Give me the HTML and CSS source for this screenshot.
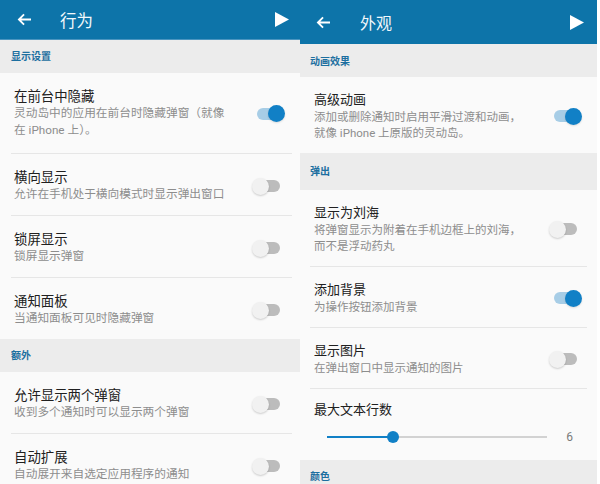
FILE: index.html
```html
<!DOCTYPE html>
<html lang="zh">
<head>
<meta charset="utf-8">
<link rel="stylesheet" href="styles.css">
</head>
<body>
<div class="screen">
  <div class="panel panel-left">
    <div class="appbar">
      <svg class="back" viewBox="0 0 16 14" width="15" height="13"><path d="M15 7H2M7.5 1.5L2 7l5.5 5.5" fill="none" stroke="#fff" stroke-width="2"/></svg>
      <span class="appbar-title">行为</span>
      <svg class="play" viewBox="0 0 14 15" width="14" height="15"><path d="M0 0L14 7.5L0 15Z" fill="#fff"/></svg>
    </div>
    <div class="section">显示设置</div>
    <div class="item">
      <div class="text">
        <div class="title">在前台中隐藏</div>
        <div class="sub">灵动岛中的应用在前台时隐藏弹窗（就像<br>在 iPhone 上）。</div>
      </div>
      <div class="toggle on"><span class="thumb"></span></div>
    </div>
    <div class="item">
      <div class="text">
        <div class="title">横向显示</div>
        <div class="sub">允许在手机处于横向模式时显示弹出窗口</div>
      </div>
      <div class="toggle"><span class="thumb"></span></div>
    </div>
    <div class="item">
      <div class="text">
        <div class="title">锁屏显示</div>
        <div class="sub">锁屏显示弹窗</div>
      </div>
      <div class="toggle"><span class="thumb"></span></div>
    </div>
    <div class="item last">
      <div class="text">
        <div class="title">通知面板</div>
        <div class="sub">当通知面板可见时隐藏弹窗</div>
      </div>
      <div class="toggle"><span class="thumb"></span></div>
    </div>
    <div class="section">额外</div>
    <div class="item">
      <div class="text">
        <div class="title">允许显示两个弹窗</div>
        <div class="sub">收到多个通知时可以显示两个弹窗</div>
      </div>
      <div class="toggle"><span class="thumb"></span></div>
    </div>
    <div class="item last">
      <div class="text">
        <div class="title">自动扩展</div>
        <div class="sub">自动展开来自选定应用程序的通知</div>
      </div>
      <div class="toggle"><span class="thumb"></span></div>
    </div>
  </div>

  <div class="panel panel-right">
    <div class="appbar">
      <svg class="back" viewBox="0 0 16 14" width="15" height="13"><path d="M15 7H2M7.5 1.5L2 7l5.5 5.5" fill="none" stroke="#fff" stroke-width="2"/></svg>
      <span class="appbar-title">外观</span>
      <svg class="play" viewBox="0 0 14 15" width="14" height="15"><path d="M0 0L14 7.5L0 15Z" fill="#fff"/></svg>
    </div>
    <div class="section first">动画效果</div>
    <div class="item last">
      <div class="text">
        <div class="title">高级动画</div>
        <div class="sub">添加或删除通知时启用平滑过渡和动画，<br>就像 iPhone 上原版的灵动岛。</div>
      </div>
      <div class="toggle on"><span class="thumb"></span></div>
    </div>
    <div class="section">弹出</div>
    <div class="item">
      <div class="text">
        <div class="title">显示为刘海</div>
        <div class="sub">将弹窗显示为附着在手机边框上的刘海，<br>而不是浮动药丸</div>
      </div>
      <div class="toggle"><span class="thumb"></span></div>
    </div>
    <div class="item">
      <div class="text">
        <div class="title">添加背景</div>
        <div class="sub">为操作按钮添加背景</div>
      </div>
      <div class="toggle on"><span class="thumb"></span></div>
    </div>
    <div class="item">
      <div class="text">
        <div class="title">显示图片</div>
        <div class="sub">在弹出窗口中显示通知的图片</div>
      </div>
      <div class="toggle"><span class="thumb"></span></div>
    </div>
    <div class="item slider-item last">
      <div class="title">最大文本行数</div>
      <div class="slider-row">
        <div class="slider">
          <div class="slider-fill" style="width: 30%"></div>
          <span class="slider-thumb" style="left: 30%"></span>
        </div>
        <span class="slider-value">6</span>
      </div>
    </div>
    <div class="section last-section">颜色</div>
  </div>
</div>
</body>
</html>
```

FILE: styles.css
```css
* { box-sizing: border-box; }
html, body {
  margin: 0;
  padding: 0;
  background: #ffffff;
}
body {
  width: 600px;
  height: 484px;
  overflow: hidden;
  font-family: Roboto, "Noto Sans CJK SC", "Noto Sans", sans-serif;
}
.screen {
  display: flex;
  width: 600px;
  height: 484px;
}
.panel {
  background: #fafafa;
  height: 484px;
  overflow: hidden;
  display: flex;
  flex-direction: column;
}
.panel-left { width: 300px; }
.panel-right { width: 297px; }

.appbar {
  background: #0d74a9;
  display: flex;
  align-items: center;
  flex-shrink: 0;
  color: #fff;
}
.panel-left .appbar { height: 40px; padding: 0 11px 0 17px; border-bottom: 1px solid #4a95c0; }
.panel-right .appbar { height: 44px; padding: 0 13px 0 16px; }
.back { flex-shrink: 0; }
.appbar-title {
  flex: 1;
  font-size: 16.5px;
  margin-left: 28px;
  color: #f2f8fb;
}
.panel-right .appbar-title { font-size: 16px; margin-left: 29px; }
.play { flex-shrink: 0; }

.section {
  background: #ececec;
  color: #1c6fa0;
  font-size: 10px;
  font-weight: 700;
  flex-shrink: 0;
}
.panel-left .section { height: 33px; line-height: 34px; padding-left: 11px; }
.panel-right .section { height: 37px; line-height: 38px; padding-left: 10px; }
.panel-right .section.first { height: 33px; line-height: 36px; }
.panel-right .section.last-section { line-height: 34px; }

.item {
  display: flex;
  align-items: center;
  border-bottom: 1px solid #e6e6e6;
  flex-shrink: 0;
}
.item.last { border-bottom: none; }
.panel-left .item { margin: 0 8px 0 11px; padding: 15px 12px 12px 3px; }
.panel-left .item:nth-child(3) { padding-bottom: 14px; }
.panel-right .item { margin: 0 10px 0 10px; padding: 14px 10px 12px 4px; }

.text { flex: 1; min-width: 0; }
.title { color: #202020; }
.sub { color: #8d8d8d; white-space: nowrap; }
.panel-left .title { font-size: 13.4px; line-height: 17px; }
.panel-left .sub { font-size: 11.7px; line-height: 17px; }
.panel-right .title { font-size: 13px; line-height: 18px; }
.panel-right .sub { font-size: 11.5px; line-height: 16px; }

.toggle {
  position: relative;
  flex-shrink: 0;
  width: 23px;
  height: 12px;
  border-radius: 6px;
  background: #bcbcbc;
}
.toggle .thumb {
  position: absolute;
  top: -2.5px;
  left: -5px;
  width: 17px;
  height: 17px;
  border-radius: 50%;
  background: #f1f1f1;
  box-shadow: 0 1px 2px rgba(0,0,0,0.18);
}
.toggle.on { background: #a7cde6; }
.toggle.on .thumb {
  left: auto;
  right: -5px;
  background: #1180c6;
  box-shadow: 0 1px 2px rgba(0,0,0,0.12);
}

.slider-item {
  flex-direction: column;
  align-items: stretch;
}
.panel-right .slider-item { padding: 12px 10px 11px 4px; }
.slider-row {
  display: flex;
  align-items: center;
  height: 24px;
  margin-top: 6px;
}
.slider {
  position: relative;
  flex: 1;
  height: 2px;
  background: #d2d2d2;
  margin-left: 13px;
}
.slider-fill {
  height: 2px;
  background: #1180c6;
}
.slider-thumb {
  position: absolute;
  top: -5px;
  width: 12px;
  height: 12px;
  margin-left: -6px;
  border-radius: 50%;
  background: #1180c6;
}
.slider-value {
  width: 30px;
  text-align: right;
  padding-right: 4px;
  color: #7a7a7a;
  font-size: 12px;
}
```
